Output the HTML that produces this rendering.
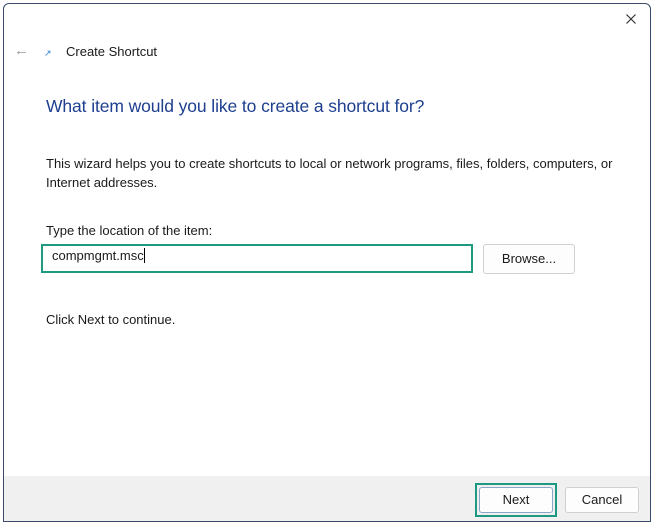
<!DOCTYPE html>
<html><head><style>
body{margin:0;width:655px;height:527px;background:#fff;position:relative;overflow:hidden;font-family:"Segoe UI","Liberation Sans",sans-serif;color:#1a1a1a}
.win{position:absolute;left:3px;top:3px;width:646px;height:517px;border:1px solid #3a4a6a;background:#fff;border-radius:6px 6px 0 0;overflow:hidden}
.foot{position:absolute;left:0;right:0;bottom:0;height:45px;background:#f0f0f0}
.t{position:absolute;font-size:13px;white-space:nowrap}
.btn{position:absolute;background:#fdfdfd;border:1px solid #d0d0d0;border-radius:3px;font-size:13px;text-align:center;box-sizing:border-box}
</style></head><body>
<div class="win">
<div class="t" style="left:10px;top:38px;color:#999;font-size:15px">←</div>
<div class="t" style="left:40px;top:44px;color:#2a7fd4;font-size:9px">↗</div>
<div class="t" style="left:62px;top:40px">Create Shortcut</div>
<svg style="position:absolute;left:622px;top:10px" width="10" height="10"><path d="M0.5 0.5L9.5 9.5M9.5 0.5L0.5 9.5" stroke="#333" stroke-width="1.2"/></svg>
<div class="t" style="left:42px;top:92px;font-size:17.5px;color:#1e3f8f;letter-spacing:-0.1px">What item would you like to create a shortcut for?</div>
<div class="t" style="left:42px;top:152px">This wizard helps you to create shortcuts to local or network programs, files, folders, computers, or</div>
<div class="t" style="left:42px;top:171px">Internet addresses.</div>
<div class="t" style="left:42px;top:219px">Type the location of the item:</div>
<div style="position:absolute;left:37px;top:240px;width:428px;height:25px;border:2px solid #1d9a80;box-sizing:content-box"></div>
<div class="t" style="left:48px;top:244px">compmgmt.msc<span style="border-left:1px solid #000;margin-left:0">&nbsp;</span></div>
<div class="btn" style="left:479px;top:240px;width:92px;height:30px;line-height:28px">Browse...</div>
<div class="t" style="left:42px;top:308px">Click Next to continue.</div>
<div class="foot"></div>
<div style="position:absolute;left:471px;top:479px;width:82px;height:34px;border:2px solid #1d9a80;box-sizing:border-box"></div>
<div class="btn" style="left:475px;top:483px;width:74px;height:26px;line-height:24px;border-color:#8aa6c8">Next</div>
<div class="btn" style="left:561px;top:483px;width:74px;height:26px;line-height:24px">Cancel</div>
</div>
</body></html>
